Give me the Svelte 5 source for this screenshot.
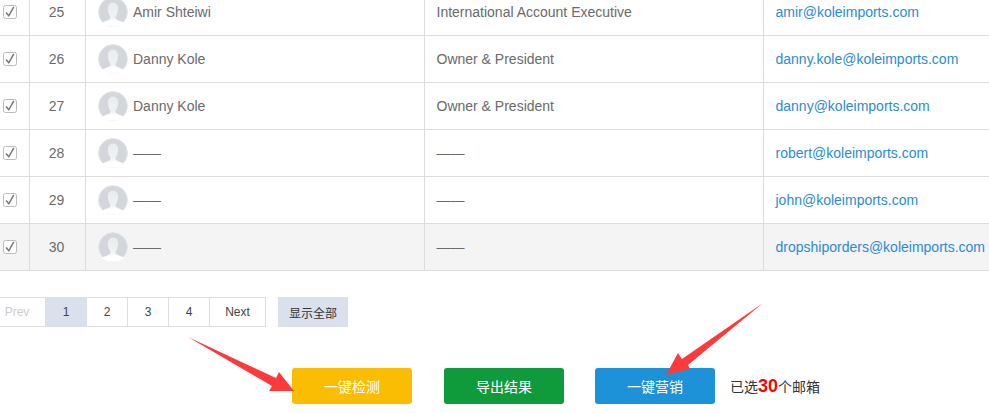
<script>
  const rows = [
    { n: 25, name: 'Amir Shteiwi', title: 'International Account Executive', email: 'amir@koleimports.com' },
    { n: 26, name: 'Danny Kole', title: 'Owner & President', email: 'danny.kole@koleimports.com' },
    { n: 27, name: 'Danny Kole', title: 'Owner & President', email: 'danny@koleimports.com' },
    { n: 28, name: '——', title: '——', email: 'robert@koleimports.com' },
    { n: 29, name: '——', title: '——', email: 'john@koleimports.com' },
    { n: 30, name: '——', title: '——', email: 'dropshiporders@koleimports.com', hover: true }
  ];
  const pages = ['1', '2', '3', '4'];
</script>

<div class="page">
  <div class="table">
    {#each rows as r}
      <div class="row" class:hover={r.hover}>
        <div class="cell check">
          <svg width="14" height="14" viewBox="0 0 14 14">
            <rect x="0.5" y="0.5" width="13" height="13" rx="2" fill="#fff" stroke="#bbb" />
            <path d="M3 7.5 L5.8 10.8 L10.8 1.8" fill="none" stroke="#777" stroke-width="1.5" />
          </svg>
        </div>
        <div class="cell num">{r.n}</div>
        <div class="cell name">
          <svg class="avatar" width="30" height="30" viewBox="0 0 30 30">
            <circle cx="15" cy="15" r="15" fill="#fff" />
            <circle cx="15" cy="15" r="14.5" fill="#d3d7dc" stroke="#e4e6e9" />
            <path d="M15 5.5 C10.8 5.5 9.6 9.5 10 13 C10.3 16 11.2 18 12.4 19.5 C12.8 21 12.2 22 10.8 22.8 C8.5 24 5.8 24.6 4.2 26 C7 28.6 10.8 29.8 15 29.8 C19.2 29.8 23 28.6 25.8 26 C24.2 24.6 21.5 24 19.2 22.8 C17.8 22 17.2 21 17.6 19.5 C18.8 18 19.7 16 20 13 C20.4 9.5 19.2 5.5 15 5.5 Z" fill="url(#fade)" />
            <defs>
              <linearGradient id="fade" x1="0" y1="0" x2="0" y2="1">
                <stop offset="0" stop-color="#e9ebee" />
                <stop offset="0.6" stop-color="#f1f2f4" />
                <stop offset="0.8" stop-color="#fff" />
              </linearGradient>
            </defs>
          </svg>
          <span>{r.name}</span>
        </div>
        <div class="cell job">{r.title}</div>
        <div class="cell email"><a href="#top">{r.email}</a></div>
      </div>
    {/each}
  </div>

  <div class="pager">
    <div class="pages">
      <span class="pg prev">Prev</span>
      {#each pages as p, i}
        <span class="pg num-pg" class:active={i === 0}>{p}</span>
      {/each}
      <span class="pg next">Next</span>
    </div>
    <button class="show-all">显示全部</button>
  </div>

  <div class="actions">
    <button class="act yellow">一键检测</button>
    <button class="act green">导出结果</button>
    <button class="act blue">一键营销</button>
    <span class="count">已选<b>30</b>个邮箱</span>
  </div>

  <svg class="arrows" width="989" height="413" viewBox="0 0 989 413">
    <polygon points="188,337 276,378 279,372 294,391 269,391 272,386" fill="#fb3b3b" />
    <polygon points="763,303 682,359 678,353 666,375 690,369 688,365" fill="#fb3b3b" />
  </svg>
</div>

<style>
  :global(body) {
    margin: 0;
    background: #fff;
  }
  .page {
    position: relative;
    width: 989px;
    height: 413px;
    overflow: hidden;
    font-family: "Liberation Sans", "Noto Sans CJK SC", sans-serif;
    font-size: 14px;
    color: #6a6a6a;
  }
  .table {
    margin-top: -11px;
    width: 989px;
  }
  .row {
    display: grid;
    grid-template-columns: 30px 56px 339px 339px 225px;
    height: 47px;
    box-sizing: border-box;
    border-bottom: 1px solid #ddd;
  }
  .row.hover {
    background: #f4f4f4;
  }
  .cell {
    display: flex;
    align-items: center;
    box-sizing: border-box;
    border-right: 1px solid #ddd;
    white-space: nowrap;
  }
  .cell:last-child {
    border-right: 0;
  }
  .check {
    padding-left: 3px;
  }
  .num {
    justify-content: center;
    padding-right: 2px;
  }
  .name {
    padding-left: 12px;
    gap: 5px;
  }
  .job {
    padding-left: 11.5px;
  }
  .email {
    padding-left: 11.5px;
  }
  .email a {
    color: #2a8bd8;
    text-decoration: none;
  }
  .pager {
    display: flex;
    align-items: stretch;
    gap: 12px;
    margin-top: 26px;
    margin-left: -12px;
    height: 30px;
  }
  .pages {
    display: flex;
    border: 1px solid #ddd;
    box-sizing: border-box;
  }
  .pg {
    display: flex;
    align-items: center;
    justify-content: center;
    box-sizing: border-box;
    font-size: 12px;
    color: #444;
    border-right: 1px solid #ddd;
    width: 41px;
  }
  .pg:last-child {
    border-right: 0;
  }
  .prev {
    width: 56px;
    color: #ccc;
    border-right: 0;
  }
  .next {
    width: 55px;
  }
  .active {
    background: #dae1ec;
    border-right: 0;
    width: 42px;
    margin: -1px 0;
  }
  .show-all {
    border: 0;
    padding: 0;
    width: 70px;
    background: #dae1ec;
    color: #333;
    font: 12px "Liberation Sans", "Noto Sans CJK SC", sans-serif;
  }
  .actions {
    display: flex;
    align-items: center;
    margin-top: 41px;
    margin-left: 292px;
    height: 36px;
  }
  .act {
    width: 120px;
    height: 36px;
    border: 0;
    border-radius: 3px;
    color: #fff;
    font: 14px "Liberation Sans", "Noto Sans CJK SC", sans-serif;
    margin-right: 32px;
    padding: 0;
  }
  .yellow { background: #fbbd04; }
  .green { background: #0f9a3b; margin-right: 31px; }
  .blue { background: #1d92d8; margin-right: 15px; }
  .count {
    font-size: 14px;
    color: #333;
  }
  .count b {
    color: #f00;
    font-size: 18px;
  }
  .arrows {
    position: absolute;
    left: 0;
    top: 0;
    pointer-events: none;
  }
</style>
